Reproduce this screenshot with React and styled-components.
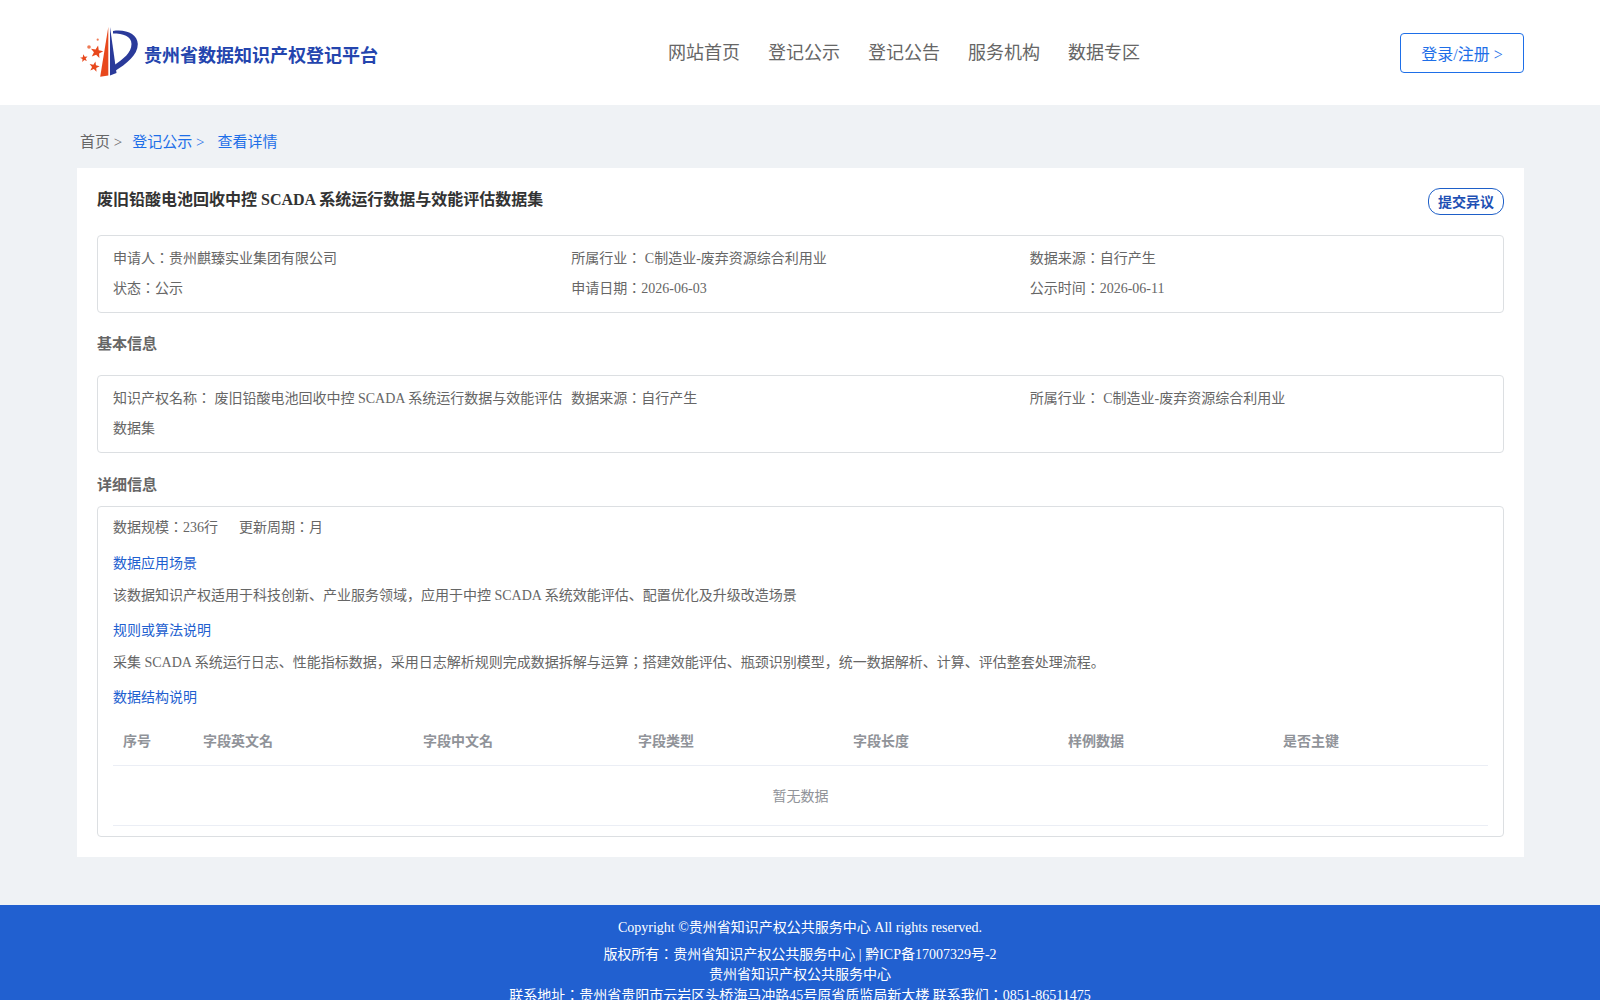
import styled, { createGlobalStyle } from 'styled-components';

const GlobalStyle = createGlobalStyle`
	html, body {
		margin: 0;
		padding: 0;
		background: #eff2f5;
		font-family: "Liberation Serif", "Noto Sans CJK JP", serif;
	}
	* {
		box-sizing: border-box;
	}
`;

const infoRows = [
	'申请人：贵州麒臻实业集团有限公司',
	'所属行业： C制造业-废弃资源综合利用业',
	'数据来源：自行产生',
	'状态：公示',
	'申请日期：2026-06-03',
	'公示时间：2026-06-11',
];

const basicRows = [
	'知识产权名称： 废旧铅酸电池回收中控 SCADA 系统运行数据与效能评估数据集',
	'数据来源：自行产生',
	'所属行业： C制造业-废弃资源综合利用业',
];

const columns = ['序号', '字段英文名', '字段中文名', '字段类型', '字段长度', '样例数据', '是否主键'];

// five point star, used for the logo
function Star({ x, y, r, rotate = 0 }) {
	const points = [];
	for (let i = 0; i < 10; i++) {
		const radius = i % 2 === 0 ? r : r * 0.42;
		const angle = (Math.PI / 5) * i - Math.PI / 2;
		points.push(`${(radius * Math.cos(angle)).toFixed(2)},${(radius * Math.sin(angle)).toFixed(2)}`);
	}
	return (
		<polygon
			points={points.join(' ')}
			fill="#e8481c"
			transform={`translate(${x} ${y}) rotate(${rotate})`}
		/>
	);
}

function Logo() {
	return (
		<svg width="60" height="52" viewBox="0 0 60 52">
			<path d="M28.3 0 L28.3 48.5 L20.2 49.8 Z" fill="#e8481c" />
			<path d="M30 0 L36.5 46 L30 48.5 Z" fill="#2a3a9a" />
			<path
				d="M33 4 C46 2 57.5 7 57.8 17 C58 28 46 37 35 44 L34.5 38 C43 32 51.5 26 51.5 17 C51.5 9 43 6.5 33 6.5 Z"
				fill="#2a3a9a"
			/>
			<Star x={16.7} y={25} r={6.6} rotate={12} />
			<Star x={4} y={31.3} r={4} rotate={-10} />
			<Star x={14.3} y={39.8} r={5.4} rotate={12} />
			<circle cx="9" cy="20" r="1.8" fill="#ee7a55" />
			<circle cx="17.7" cy="12.7" r="1.1" fill="#ee7a55" />
		</svg>
	);
}

function App() {
	return (
		<>
			<GlobalStyle />
			<Header>
				<Brand>
					<Logo />
					<BrandName>贵州省数据知识产权登记平台</BrandName>
				</Brand>
				<Nav>
					<NavItem>网站首页</NavItem>
					<NavItem>登记公示</NavItem>
					<NavItem>登记公告</NavItem>
					<NavItem>服务机构</NavItem>
					<NavItem>数据专区</NavItem>
				</Nav>
				<LoginButton type="button">登录/注册 &gt;</LoginButton>
			</Header>
			<Main>
				<Crumbs>
					<span>首页 &gt;</span>
					<CrumbLink>登记公示 &gt;</CrumbLink>
					<CrumbLink $last>查看详情</CrumbLink>
				</Crumbs>
				<Card>
					<TitleRow>
						<Title>废旧铅酸电池回收中控 SCADA 系统运行数据与效能评估数据集</Title>
						<ObjectionButton type="button">提交异议</ObjectionButton>
					</TitleRow>
					<InfoBox>
						{infoRows.map((text) => (
							<InfoCell key={text}>{text}</InfoCell>
						))}
					</InfoBox>
					<SectionTitle>基本信息</SectionTitle>
					<InfoBox>
						{basicRows.map((text) => (
							<InfoCell key={text}>{text}</InfoCell>
						))}
					</InfoBox>
					<SectionTitle $tight>详细信息</SectionTitle>
					<DetailBox>
						<Meta>
							<span>数据规模：236行</span>
							<span>更新周期：月</span>
						</Meta>
						<SubTitle>数据应用场景</SubTitle>
						<Desc>该数据知识产权适用于科技创新、产业服务领域，应用于中控 SCADA 系统效能评估、配置优化及升级改造场景</Desc>
						<SubTitle>规则或算法说明</SubTitle>
						<Desc>采集 SCADA 系统运行日志、性能指标数据，采用日志解析规则完成数据拆解与运算；搭建效能评估、瓶颈识别模型，统一数据解析、计算、评估整套处理流程。</Desc>
						<SubTitle>数据结构说明</SubTitle>
						<Table>
							<thead>
								<tr>
									{columns.map((name) => (
										<th key={name}>{name}</th>
									))}
								</tr>
							</thead>
							<tbody>
								<tr>
									<td colSpan={7}>暂无数据</td>
								</tr>
							</tbody>
						</Table>
					</DetailBox>
				</Card>
			</Main>
			<Footer>
				<FooterLead>Copyright ©贵州省知识产权公共服务中心 All rights reserved.</FooterLead>
				<FooterLine>版权所有：贵州省知识产权公共服务中心 | 黔ICP备17007329号-2</FooterLine>
				<FooterLine>贵州省知识产权公共服务中心</FooterLine>
				<FooterLine>联系地址：贵州省贵阳市云岩区头桥海马冲路45号原省质监局新大楼 联系我们：0851-86511475</FooterLine>
			</Footer>
		</>
	);
}

const Header = styled.header`
	height: 105px;
	background: #fff;
	padding: 0 76px 0 80px;
	display: grid;
	grid-template-columns: 588px 1fr auto;
	align-items: center;
`;

const Brand = styled.div`
	display: flex;
	align-items: center;
	gap: 4px;
`;

const BrandName = styled.span`
	font-size: 18px;
	font-weight: 700;
	color: #2445ae;
	margin-top: 3px;
`;

const Nav = styled.nav`
	display: flex;
	gap: 28px;
	margin-bottom: 4px;
`;

const NavItem = styled.a`
	font-size: 18px;
	color: #666;
`;

const LoginButton = styled.button`
	width: 124px;
	height: 40px;
	background: #fff;
	border: 1px solid #1e6fe8;
	border-radius: 4px;
	color: #1e6fe8;
	font-family: inherit;
	font-size: 16px;
	padding: 0;
`;

const Main = styled.main`
	padding: 0 76px 48px 77px;
`;

const Crumbs = styled.div`
	height: 63px;
	padding: 8px 0 0 3px;
	display: flex;
	align-items: center;
	font-size: 15px;
	color: #666;
`;

const CrumbLink = styled.a`
	color: #1e6fe8;
	margin-left: ${(p) => (p.$last ? '13px' : '10px')};
`;

const Card = styled.section`
	background: #fff;
	padding: 20px;
`;

const TitleRow = styled.div`
	display: flex;
	justify-content: space-between;
	align-items: flex-start;
	height: 47px;
`;

const Title = styled.h1`
	margin: 0;
	font-size: 16px;
	line-height: 24px;
	font-weight: 700;
	color: #333;
`;

const ObjectionButton = styled.button`
	width: 76px;
	height: 27px;
	background: #fff;
	border: 1px solid #1e5fc8;
	border-radius: 12px;
	color: #1e50b4;
	font-family: inherit;
	font-size: 14px;
	font-weight: 700;
	padding: 0 0 2px;
`;

const InfoBox = styled.div`
	display: grid;
	grid-template-columns: repeat(3, 1fr);
	padding: 8px 15px;
	border: 1px solid #dcdfe2;
	border-radius: 4px;
`;

const InfoCell = styled.div`
	font-size: 14px;
	line-height: 30px;
	color: #666;
`;

const SectionTitle = styled.h2`
	margin: 0;
	height: ${(p) => (p.$tight ? '53px' : '62px')};
	padding-top: ${(p) => (p.$tight ? '21px' : '20px')};
	font-size: 15px;
	line-height: 22px;
	font-weight: 700;
	color: #666;
`;

const DetailBox = styled.div`
	padding: 6px 15px 10px;
	border: 1px solid #dcdfe2;
	border-radius: 4px;
`;

const Meta = styled.div`
	display: flex;
	gap: 21px;
	font-size: 14px;
	line-height: 30px;
	color: #666;
`;

const SubTitle = styled.div`
	font-size: 14px;
	line-height: 30px;
	color: #1e5fd0;
	margin-top: 6px;
`;

const Desc = styled.p`
	margin: 2px 0 0;
	font-size: 14px;
	line-height: 30px;
	color: #666;
	& + div {
		margin-top: 5px;
	}
`;

const Table = styled.table`
	width: 100%;
	margin-top: 3px;
	table-layout: fixed;
	border-collapse: collapse;
	font-size: 14px;
	color: #909399;

	th {
		height: 49px;
		padding: 0 10px;
		text-align: left;
		font-weight: 700;
		border-bottom: 1px solid #ebeef5;
	}
	th:nth-child(1) {
		width: 80px;
	}
	th:nth-child(2) {
		width: 220px;
	}
	td {
		height: 60px;
		text-align: center;
		border-bottom: 1px solid #ebeef5;
	}
`;

const Footer = styled.footer`
	background: #2160d0;
	padding-top: 11px;
	padding-bottom: 14px;
	text-align: center;
	color: #fff;
	font-size: 14px;
`;

const FooterLead = styled.div`
	line-height: 24px;
	margin-bottom: 5px;
`;

const FooterLine = styled.div`
	line-height: 20.5px;
`;

export default App;
